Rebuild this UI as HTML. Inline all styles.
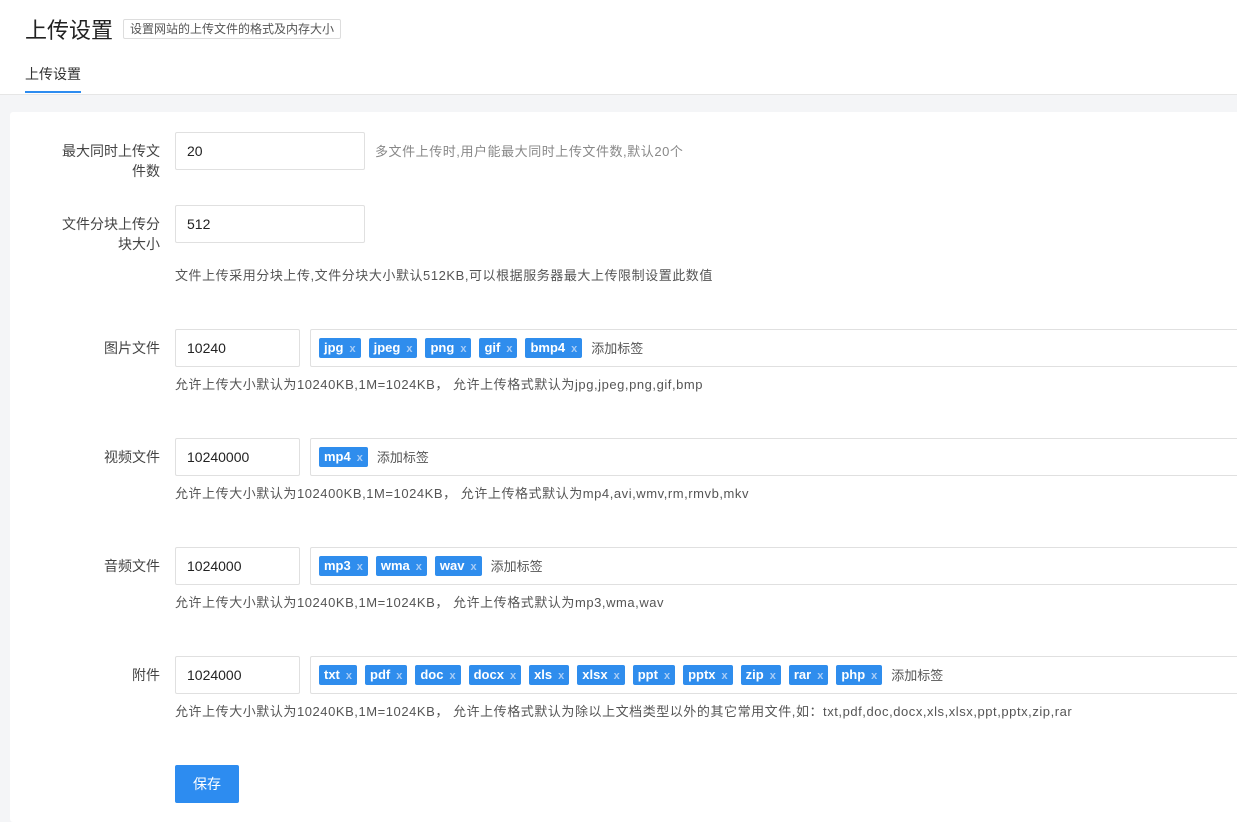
<!DOCTYPE html>
<html><head><meta charset="utf-8"><style>
*{box-sizing:border-box;margin:0;padding:0}
body{width:1237px;height:808px;overflow:hidden;background:#f4f5f7;font-family:"Liberation Sans","Noto Sans CJK SC",sans-serif;color:#333;position:relative}
.top{position:absolute;left:0;top:0;width:1237px;height:95px;background:#fff;border-bottom:1px solid #e6e6e6}
.title{position:absolute;left:25px;top:13px;font-size:22px;color:#222}
.sub{position:absolute;left:123px;top:19px;height:20px;padding:0 6px;border:1px solid #ddd;font-size:12px;line-height:18px;color:#555;border-radius:2px}
.tab{position:absolute;left:25px;top:64px;font-size:14px;color:#333}
.tabline{position:absolute;left:25px;top:91px;width:56px;height:2px;background:#2d8cf0}
.card{position:absolute;left:10px;top:112px;width:1240px;height:710px;background:#fff;border-radius:3px}
.lbl{position:absolute;right:1077px;font-size:14px;color:#444;text-align:right;line-height:20px}
.inp{position:absolute;left:175px;height:38px;border:1px solid #e0e0e0;border-radius:2px;font-size:14px;line-height:36px;padding-left:11px;color:#222;background:#fff}
.hint{position:absolute;font-size:13px;letter-spacing:0.55px;color:#555;white-space:nowrap}
.tags{position:absolute;left:310px;width:940px;height:38px;border:1px solid #e0e0e0;border-radius:2px;padding-left:8px;display:flex;align-items:center}
.tag{display:inline-block;height:20px;line-height:20px;background:#2f8ded;color:#fff;font-weight:bold;font-size:13px;padding:0 5px;border-radius:2px;margin-right:8px}
.tag i{font-style:normal;color:#a9cdf6;font-size:11px;margin-left:6px}
.add{font-size:13px;color:#555;margin-left:1px;margin-top:-2px}
.btn{position:absolute;left:175px;top:765px;width:64px;height:38px;background:#2d8cf0;color:#fff;font-size:14px;text-align:center;line-height:38px;border-radius:2px}
</style></head><body>
<div class="top">
<div class="title">上传设置</div>
<div class="sub">设置网站的上传文件的格式及内存大小</div>
<div class="tab">上传设置</div>
<div class="tabline"></div>
</div>
<div class="card"></div>

<div class="lbl" style="top:141px">最大同时上传文<br>件数</div>
<div class="inp" style="top:132px;width:190px">20</div>
<div class="hint" style="left:375px;top:141px;color:#888">多文件上传时,用户能最大同时上传文件数,默认20个</div>

<div class="lbl" style="top:214px">文件分块上传分<br>块大小</div>
<div class="inp" style="top:205px;width:190px">512</div>
<div class="hint" style="left:175px;top:265px">文件上传采用分块上传,文件分块大小默认512KB,可以根据服务器最大上传限制设置此数值</div>

<div class="lbl" style="top:338px">图片文件</div>
<div class="inp" style="top:329px;width:125px">10240</div>
<div class="tags" style="top:329px"><span class="tag">jpg<i>x</i></span><span class="tag">jpeg<i>x</i></span><span class="tag">png<i>x</i></span><span class="tag">gif<i>x</i></span><span class="tag">bmp4<i>x</i></span><span class="add">添加标签</span></div>
<div class="hint" style="left:175px;top:374px">允许上传大小默认为10240KB,1M=1024KB， 允许上传格式默认为jpg,jpeg,png,gif,bmp</div>

<div class="lbl" style="top:447px">视频文件</div>
<div class="inp" style="top:438px;width:125px">10240000</div>
<div class="tags" style="top:438px"><span class="tag">mp4<i>x</i></span><span class="add">添加标签</span></div>
<div class="hint" style="left:175px;top:483px">允许上传大小默认为102400KB,1M=1024KB， 允许上传格式默认为mp4,avi,wmv,rm,rmvb,mkv</div>

<div class="lbl" style="top:556px">音频文件</div>
<div class="inp" style="top:547px;width:125px">1024000</div>
<div class="tags" style="top:547px"><span class="tag">mp3<i>x</i></span><span class="tag">wma<i>x</i></span><span class="tag">wav<i>x</i></span><span class="add">添加标签</span></div>
<div class="hint" style="left:175px;top:592px">允许上传大小默认为10240KB,1M=1024KB， 允许上传格式默认为mp3,wma,wav</div>

<div class="lbl" style="top:665px">附件</div>
<div class="inp" style="top:656px;width:125px">1024000</div>
<div class="tags" style="top:656px"><span class="tag">txt<i>x</i></span><span class="tag">pdf<i>x</i></span><span class="tag">doc<i>x</i></span><span class="tag">docx<i>x</i></span><span class="tag">xls<i>x</i></span><span class="tag">xlsx<i>x</i></span><span class="tag">ppt<i>x</i></span><span class="tag">pptx<i>x</i></span><span class="tag">zip<i>x</i></span><span class="tag">rar<i>x</i></span><span class="tag">php<i>x</i></span><span class="add">添加标签</span></div>
<div class="hint" style="left:175px;top:701px">允许上传大小默认为10240KB,1M=1024KB， 允许上传格式默认为除以上文档类型以外的其它常用文件,如：txt,pdf,doc,docx,xls,xlsx,ppt,pptx,zip,rar</div>

<div class="btn">保存</div>
</body></html>
